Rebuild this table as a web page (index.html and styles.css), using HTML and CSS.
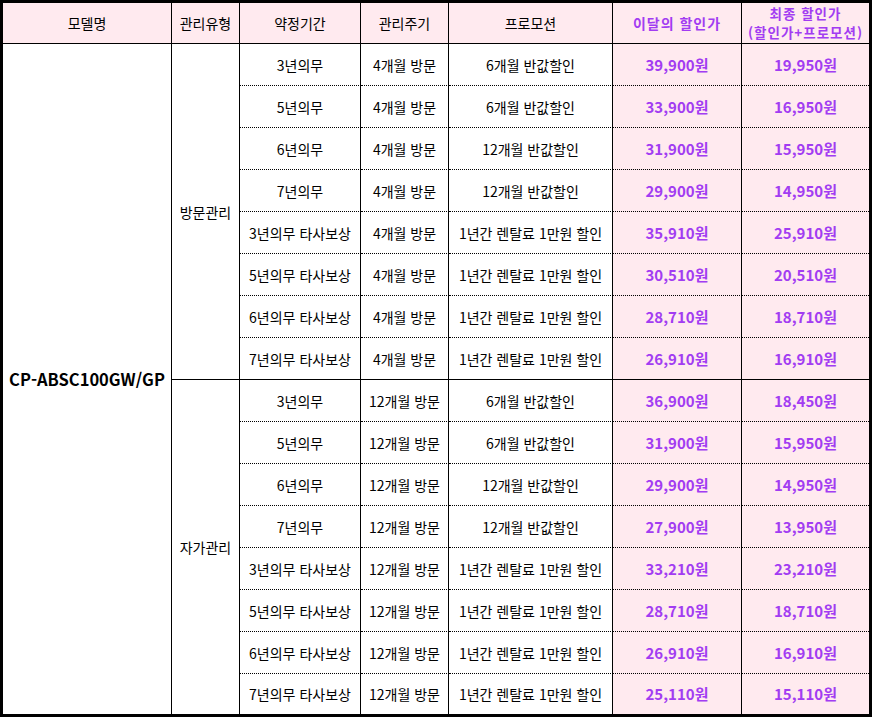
FILE: index.html
```html
<!DOCTYPE html>
<html lang="ko">
<head>
<meta charset="utf-8">
<title>CP-ABSC100GW/GP 요금표</title>
<link rel="stylesheet" href="styles.css">
</head>
<body>
<div class="sheet">
  <div class="cell head">모델명</div>
  <div class="cell head">관리유형</div>
  <div class="cell head">약정기간</div>
  <div class="cell head">관리주기</div>
  <div class="cell head">프로모션</div>
  <div class="cell head purple">이달의 할인가</div>
  <div class="cell head purple two-line last-col"><span>최종 할인가</span><span>(할인가+프로모션)</span></div>

  <div class="cell model last-row">CP-ABSC100GW/GP</div>
  <div class="cell type type-visit">방문관리</div>

  <div class="cell dot">3년의무</div><div class="cell dot">4개월 방문</div><div class="cell dot">6개월 반값할인</div><div class="cell dot price">39,900원</div><div class="cell dot price last-col">19,950원</div>
  <div class="cell dot">5년의무</div><div class="cell dot">4개월 방문</div><div class="cell dot">6개월 반값할인</div><div class="cell dot price">33,900원</div><div class="cell dot price last-col">16,950원</div>
  <div class="cell dot">6년의무</div><div class="cell dot">4개월 방문</div><div class="cell dot">12개월 반값할인</div><div class="cell dot price">31,900원</div><div class="cell dot price last-col">15,950원</div>
  <div class="cell dot">7년의무</div><div class="cell dot">4개월 방문</div><div class="cell dot">12개월 반값할인</div><div class="cell dot price">29,900원</div><div class="cell dot price last-col">14,950원</div>
  <div class="cell dot">3년의무 타사보상</div><div class="cell dot">4개월 방문</div><div class="cell dot">1년간 렌탈료 1만원 할인</div><div class="cell dot price">35,910원</div><div class="cell dot price last-col">25,910원</div>
  <div class="cell dot">5년의무 타사보상</div><div class="cell dot">4개월 방문</div><div class="cell dot">1년간 렌탈료 1만원 할인</div><div class="cell dot price">30,510원</div><div class="cell dot price last-col">20,510원</div>
  <div class="cell dot">6년의무 타사보상</div><div class="cell dot">4개월 방문</div><div class="cell dot">1년간 렌탈료 1만원 할인</div><div class="cell dot price">28,710원</div><div class="cell dot price last-col">18,710원</div>
  <div class="cell">7년의무 타사보상</div><div class="cell">4개월 방문</div><div class="cell">1년간 렌탈료 1만원 할인</div><div class="cell price">26,910원</div><div class="cell price last-col">16,910원</div>

  <div class="cell type type-self last-row">자가관리</div>

  <div class="cell dot">3년의무</div><div class="cell dot">12개월 방문</div><div class="cell dot">6개월 반값할인</div><div class="cell dot price">36,900원</div><div class="cell dot price last-col">18,450원</div>
  <div class="cell dot">5년의무</div><div class="cell dot">12개월 방문</div><div class="cell dot">6개월 반값할인</div><div class="cell dot price">31,900원</div><div class="cell dot price last-col">15,950원</div>
  <div class="cell dot">6년의무</div><div class="cell dot">12개월 방문</div><div class="cell dot">12개월 반값할인</div><div class="cell dot price">29,900원</div><div class="cell dot price last-col">14,950원</div>
  <div class="cell dot">7년의무</div><div class="cell dot">12개월 방문</div><div class="cell dot">12개월 반값할인</div><div class="cell dot price">27,900원</div><div class="cell dot price last-col">13,950원</div>
  <div class="cell dot">3년의무 타사보상</div><div class="cell dot">12개월 방문</div><div class="cell dot">1년간 렌탈료 1만원 할인</div><div class="cell dot price">33,210원</div><div class="cell dot price last-col">23,210원</div>
  <div class="cell dot">5년의무 타사보상</div><div class="cell dot">12개월 방문</div><div class="cell dot">1년간 렌탈료 1만원 할인</div><div class="cell dot price">28,710원</div><div class="cell dot price last-col">18,710원</div>
  <div class="cell dot">6년의무 타사보상</div><div class="cell dot">12개월 방문</div><div class="cell dot">1년간 렌탈료 1만원 할인</div><div class="cell dot price">26,910원</div><div class="cell dot price last-col">16,910원</div>
  <div class="cell last-row">7년의무 타사보상</div><div class="cell last-row">12개월 방문</div><div class="cell last-row">1년간 렌탈료 1만원 할인</div><div class="cell price last-row">25,110원</div><div class="cell price last-col last-row">15,110원</div>
</div>
</body>
</html>
```

FILE: styles.css
```css
* { box-sizing: border-box; }

html, body {
  margin: 0;
  padding: 0;
  background: #ffffff;
}

body {
  font-family: "Noto Sans CJK KR", "Noto Sans", sans-serif;
  font-size: 14px;
  color: #000000;
}

.sheet {
  width: 872px;
  height: 717px;
  border: 3px solid #000000;
  display: grid;
  grid-template-columns: 169px 68px 121px 88px 164px 129px 127px;
  grid-template-rows: 41px repeat(15, 42px) 40px;
}

.cell {
  display: flex;
  align-items: center;
  justify-content: center;
  text-align: center;
  border-right: 1px solid #000000;
  border-bottom: 1px solid #000000;
  white-space: nowrap;
  line-height: 18px;
}

.cell.dot {
  border-bottom: 1px dotted #000000;
}

.cell.last-col { border-right: none; }
.cell.last-row { border-bottom: none; }

.head {
  background: #ffeaef;
  font-size: 14px;
}

.purple {
  color: #a23cf2;
  font-weight: 700;
  letter-spacing: 1px;
}

.two-line {
  flex-direction: column;
  line-height: 19px;
  font-size: 13.5px;
}

.model {
  grid-column: 1;
  grid-row: 2 / span 16;
  font-weight: 700;
  font-size: 16.5px;
}

.type {
  grid-column: 2;
}

.type-visit { grid-row: 2 / span 8; }
.type-self { grid-row: 10 / span 8; }

.price {
  background: #ffeaef;
  color: #a23cf2;
  font-weight: 700;
  font-size: 15px;
}
```
